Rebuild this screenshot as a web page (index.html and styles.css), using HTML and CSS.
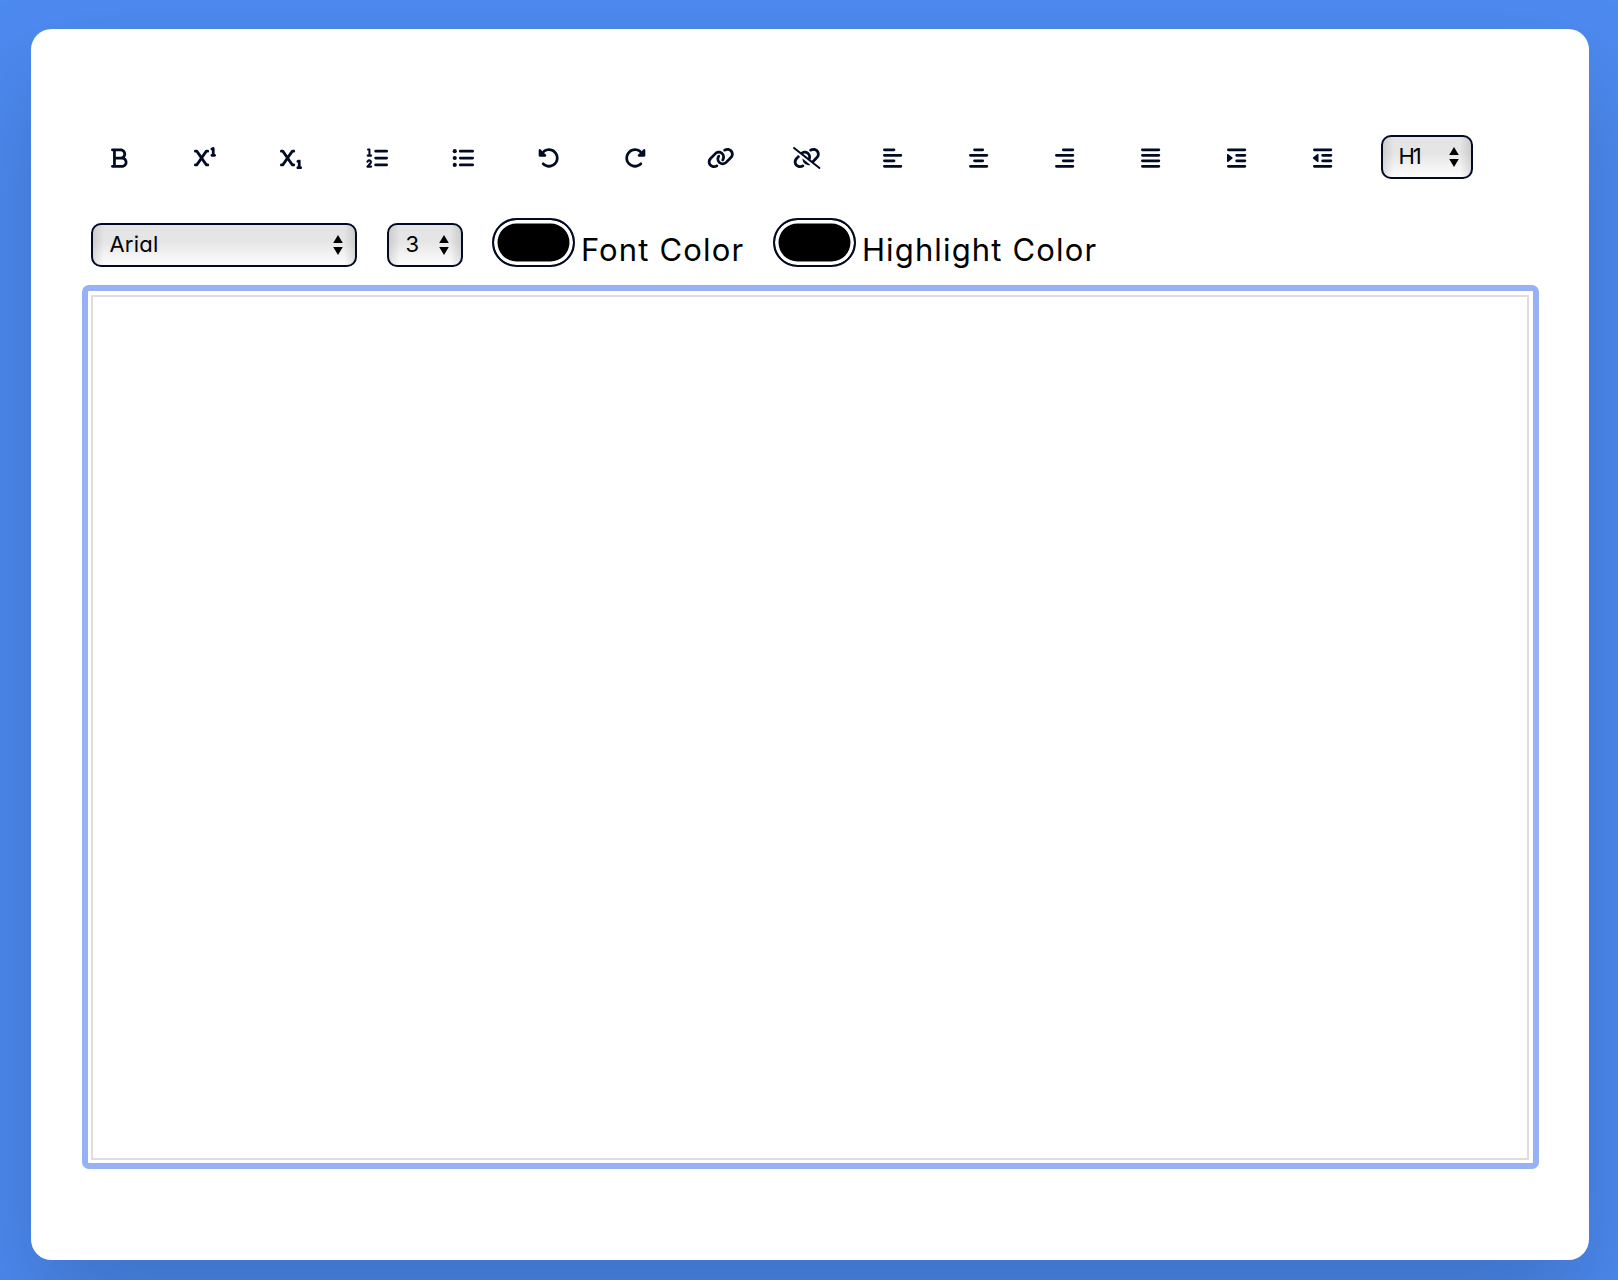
FILE: index.html
```html
<!DOCTYPE html>
<html lang="en">
<head>
<meta charset="utf-8">
<title>Text Editor</title>
<link rel="stylesheet" href="styles.css">
</head>
<body>
<svg class="defs" width="0" height="0">
  <symbol id="x" viewBox="0 0 512 512"><path d="M32 64C14.3 64 0 78.3 0 96s14.3 32 32 32H47.3l89.6 128L47.3 384H32c-17.7 0-32 14.3-32 32s14.3 32 32 32H64c10.4 0 20.2-5.1 26.2-13.6L176 311.8l85.8 122.6c6 8.6 15.8 13.6 26.2 13.6h32c17.7 0 32-14.3 32-32s-14.3-32-32-32H304.7L215.1 256l89.6-128H320c17.7 0 32-14.3 32-32s-14.3-32-32-32H288c-10.4 0-20.2 5.1-26.2 13.6L176 200.2 90.2 77.6C84.2 69.1 74.4 64 64 64H32z"/></symbol>
  <symbol id="one" viewBox="0 0 512 512"><path d="M480 32c0-11.1-5.7-21.4-15.2-27.2s-21.2-6.4-31.1-1.4l-32 16c-15.8 7.9-22.2 27.1-14.3 42.9C393 73.5 404.3 80 416 80v80c-17.7 0-32 14.3-32 32s14.3 32 32 32h64c17.7 0 32-14.3 32-32s-14.3-32-32-32V32z"/></symbol>
  <symbol id="rotate" viewBox="0 0 512 512"><path d="M48.5 224H40c-13.3 0-24-10.7-24-24V72c0-9.7 5.8-18.5 14.8-22.2s19.3-1.7 26.2 5.2L98.6 96.6c87.6-86.5 228.7-86.2 315.8 1c87.5 87.5 87.5 229.3 0 316.8s-229.3 87.5-316.8 0c-12.5-12.5-12.5-32.8 0-45.3s32.8-12.5 45.3 0c62.5 62.5 163.8 62.5 226.3 0s62.5-163.8 0-226.3c-62.2-62.2-162.7-62.5-225.3-1L185 183c6.9 6.9 8.9 17.2 5.2 26.2s-12.5 14.8-22.2 14.8H48.5z"/></symbol>
  <symbol id="arrows" viewBox="0 0 10 20"><path d="M5 0L9.8 8H.2zM5 20L9.8 12H.2z"/></symbol>
</svg>
<main class="card">
  <div class="row tools">
    <button class="tool" aria-label="Bold"><svg viewBox="0 0 384 512"><path d="M0 64C0 46.3 14.3 32 32 32H224c70.7 0 128 57.3 128 128c0 31.3-11.3 60.1-30 82.3c37.1 22.4 62 63.1 62 109.7c0 70.7-57.3 128-128 128H32c-17.7 0-32-14.3-32-32s14.3-32 32-32H48V96H32C14.3 96 0 81.7 0 64zM224 224c35.3 0 64-28.7 64-64s-28.7-64-64-64H112V224H224zM112 288V416H256c35.3 0 64-28.7 64-64s-28.7-64-64-64H112z"/></svg></button>
    <button class="tool" aria-label="Superscript"><svg viewBox="0 0 512 512"><use href="#x"/><use href="#one"/></svg></button>
    <button class="tool" aria-label="Subscript"><svg viewBox="0 0 512 512"><use href="#x"/><use href="#one" y="288"/></svg></button>
    <button class="tool" aria-label="Ordered list"><svg viewBox="0 0 512 512"><path d="M24 56c0-13.3 10.7-24 24-24H80c13.3 0 24 10.7 24 24V176h16c13.3 0 24 10.7 24 24s-10.7 24-24 24H40c-13.3 0-24-10.7-24-24s10.7-24 24-24H56V80H48C34.7 80 24 69.3 24 56zM86.7 341.2c-6.5-7.4-18.3-6.9-24 1.2L51.5 357.9c-7.7 10.8-22.7 13.3-33.5 5.6s-13.3-22.7-5.6-33.5l11.1-15.6c23.7-33.2 72.3-35.6 99.2-4.9c21.3 24.4 20.8 60.9-1.1 84.7L86.8 432H120c13.3 0 24 10.7 24 24s-10.7 24-24 24H32c-9.5 0-18.2-5.6-22-14.4s-2.1-18.9 4.3-25.9l72-78c5.3-5.8 5.4-14.6 .3-20.5z"/><path class="bars" d="M224 96H480M224 256H480M224 416H480"/></svg></button>
    <button class="tool" aria-label="Bullet list"><svg viewBox="0 0 512 512"><circle cx="64" cy="96" r="48"/><circle cx="64" cy="256" r="48"/><circle cx="64" cy="416" r="48"/><path class="bars" d="M192 96H480M192 256H480M192 416H480"/></svg></button>
    <button class="tool" aria-label="Undo"><svg viewBox="0 0 512 512"><use href="#rotate"/></svg></button>
    <button class="tool" aria-label="Redo"><svg class="flip" viewBox="0 0 512 512"><use href="#rotate"/></svg></button>
    <button class="tool" aria-label="Link"><svg viewBox="0 0 640 512"><path d="M579.8 267.7c56.5-56.5 56.5-148 0-204.5c-50-50-128.8-56.5-186.3-15.4l-1.6 1.1c-14.4 10.3-17.7 30.3-7.4 44.6s30.3 17.7 44.6 7.4l1.6-1.1c32.1-22.9 76-19.3 103.8 8.6c31.5 31.5 31.5 82.5 0 114L422.3 334.8c-31.5 31.5-82.5 31.5-114 0c-27.9-27.9-31.5-71.8-8.6-103.8l1.1-1.6c10.3-14.4 6.9-34.4-7.4-44.6s-34.4-6.9-44.6 7.4l-1.1 1.6C206.5 251.2 213 330 263 380c56.5 56.5 148 56.5 204.5 0L579.8 267.7zM60.2 244.3c-56.5 56.5-56.5 148 0 204.5c50 50 128.8 56.5 186.3 15.4l1.6-1.1c14.4-10.3 17.7-30.3 7.4-44.6s-30.3-17.7-44.6-7.4l-1.6 1.1c-32.1 22.9-76 19.3-103.8-8.6C74 372 74 321 105.5 289.5L217.7 177.2c31.5-31.5 82.5-31.5 114 0c27.9 27.9 31.5 71.8 8.6 103.9l-1.1 1.6c-10.3 14.4-6.9 34.4 7.4 44.6s34.4 6.9 44.6-7.4l1.1-1.6C433.5 260.8 427 182 377 132c-56.5-56.5-148-56.5-204.5 0L60.2 244.3z"/></svg></button>
    <button class="tool" aria-label="Unlink"><svg viewBox="0 0 640 512"><path d="M38.8 5.1C28.4-3.1 13.3-1.2 5.1 9.2S-1.2 34.7 9.2 42.9l592 464c10.4 8.2 25.5 6.3 33.7-4.1s6.3-25.5-4.1-33.7L489.3 358.2l90.5-90.5c56.5-56.5 56.5-148 0-204.5c-50-50-128.8-56.5-186.3-15.4l-1.6 1.1c-14.4 10.3-17.7 30.3-7.4 44.6s30.3 17.7 44.6 7.4l1.6-1.1c32.1-22.9 76-19.3 103.8 8.6c31.5 31.5 31.5 82.5 0 114l-96 96-31.9-25C430.9 239.6 420.1 175.1 377 132c-52.2-52.3-134.5-56.2-191.3-11.7L38.8 5.1zM239 162c30.1-14.9 67.7-9.9 92.8 15.3c20 20 27.5 48.3 21.7 74.5L239 162zM406.6 416.4L220.9 270c-2.1 39.8 12.2 80.1 42.2 110c38.9 38.9 94.4 51 143.6 36.3zm-290-228.5L60.2 244.3c-56.5 56.5-56.5 148 0 204.5c50 50 128.8 56.5 186.3 15.4l1.6-1.1c14.4-10.3 17.7-30.3 7.4-44.6s-30.3-17.7-44.6-7.4l-1.6 1.1c-32.1 22.9-76 19.3-103.8-8.6C74 372 74 321 105.5 289.5l61.8-61.8-50.6-39.9z"/></svg></button>
    <button class="tool" aria-label="Align left"><svg viewBox="0 0 448 512"><path class="bars" d="M32 64H256M32 192H416M32 320H256M32 448H416"/></svg></button>
    <button class="tool" aria-label="Align center"><svg viewBox="0 0 448 512"><path class="bars" d="M128 64H320M32 192H416M128 320H320M32 448H416"/></svg></button>
    <button class="tool" aria-label="Align right"><svg viewBox="0 0 448 512"><path class="bars" d="M192 64H416M32 192H416M192 320H416M32 448H416"/></svg></button>
    <button class="tool" aria-label="Justify"><svg viewBox="0 0 448 512"><path class="bars" d="M32 64H416M32 192H416M32 320H416M32 448H416"/></svg></button>
    <button class="tool" aria-label="Indent"><svg viewBox="0 0 448 512"><path class="bars" d="M32 64H416M224 192H416M224 320H416M32 448H416"/><path d="M127.8 268.6L25.8 347.9C15.3 356.1 0 348.6 0 335.3V176.7c0-13.3 15.3-20.8 25.8-12.6l101.9 79.3c8.2 6.4 8.2 18.9 0 25.3z"/></svg></button>
    <button class="tool" aria-label="Outdent"><svg viewBox="0 0 448 512"><path class="bars" d="M32 64H416M224 192H416M224 320H416M32 448H416"/><path d="M.2 268.6l102 79.3c10.5 8.2 25.8 .7 25.8-12.6V176.7c0-13.3-15.3-20.8-25.8-12.6L.2 243.4c-8.2 6.4-8.2 18.8 0 25.2z"/></svg></button>
    <div class="select heading"><span>H1</span><svg><use href="#arrows"/></svg></div>
  </div>
  <div class="row options">
    <div class="select family"><span>Arial</span><svg><use href="#arrows"/></svg></div>
    <div class="select size"><span>3</span><svg><use href="#arrows"/></svg></div>
    <div class="color font"><i class="well"></i><span class="label">Font Color</span></div>
    <div class="color highlight"><i class="well"></i><span class="label">Highlight Color</span></div>
  </div>
  <div class="focus"><div class="editor" contenteditable="true"></div></div>
</main>
</body>
</html>
```
FILE: styles.css
```css
* { box-sizing: border-box; }
body {
  margin: 0;
  height: 1280px;
  padding: 29.3px 29.5px 20px 31.4px;
  overflow: hidden;
  background: #4d8af0;
  color: #000;
  font-family: Inter, "Open Sans", sans-serif;
  font-feature-settings: "cv11";
}
.defs { display: block; height: 0; }
.card {
  height: 1230.5px;
  padding: 106.2px 50px 0 50.5px;
  border-radius: 20.5px;
  background: #fff;
  box-shadow: 0 51px 103px rgba(7, 20, 35, .2);
}
.row { display: flex; padding-left: 9.1px; }
.tools { height: 87.8px; }
.tool {
  display: flex;
  justify-content: center;
  align-items: center;
  width: 56px;
  height: 46px;
  margin: 0 30px 0 0;
  padding: 0;
  border: 0;
  background: none;
  flex: none;
}
.tool svg { height: 22px; fill: #010b26; overflow: visible; }
.tool .flip { transform: scaleX(-1); }
.bars { fill: none; stroke: #010b26; stroke-width: 64; stroke-linecap: round; }
.select {
  display: flex;
  justify-content: space-between;
  align-items: center;
  height: 44px;
  padding: 0 12px 0 16.5px;
  border: 2px solid #010b26;
  border-radius: 10px;
  background:
    linear-gradient(90deg, rgba(0,0,0,.11), transparent 11px calc(100% - 11px), rgba(0,0,0,.11)),
    linear-gradient(#e5e5e5 0 40%, #fdfdfd);
  font-size: 22px;
  line-height: 40px;
}
.select span { position: relative; top: -1.5px; }
.select svg { width: 10px; height: 20px; fill: #000; }
.heading { width: 92px; }
.heading span { margin-left: -1px; letter-spacing: -2px; }
.family { width: 266px; margin-right: 30px; }
.family span { letter-spacing: .2px; }
.size { width: 76px; margin-right: 28.9px; }
.options { height: 62.2px; }
.color { display: flex; height: 50px; margin-top: -5.5px; }
.font { width: 281px; }
.well {
  width: 83px;
  height: 49.5px;
  border: 2px solid #010b26;
  border-radius: 25px;
  background: #000;
  box-shadow: inset 0 0 0 3.5px #fff;
  flex: none;
}
.label {
  margin-left: 6px;
  padding-top: 12.5px;
  font-size: 31px;
  line-height: 40px;
  letter-spacing: 1.15px;
  white-space: nowrap;
}
.focus {
  height: 884px;
  padding: 3.5px;
  border: 6px solid #96b2f5;
  border-radius: 7px;
}
.editor { height: 100%; border: 2px solid #ddd; outline: none; }
```
